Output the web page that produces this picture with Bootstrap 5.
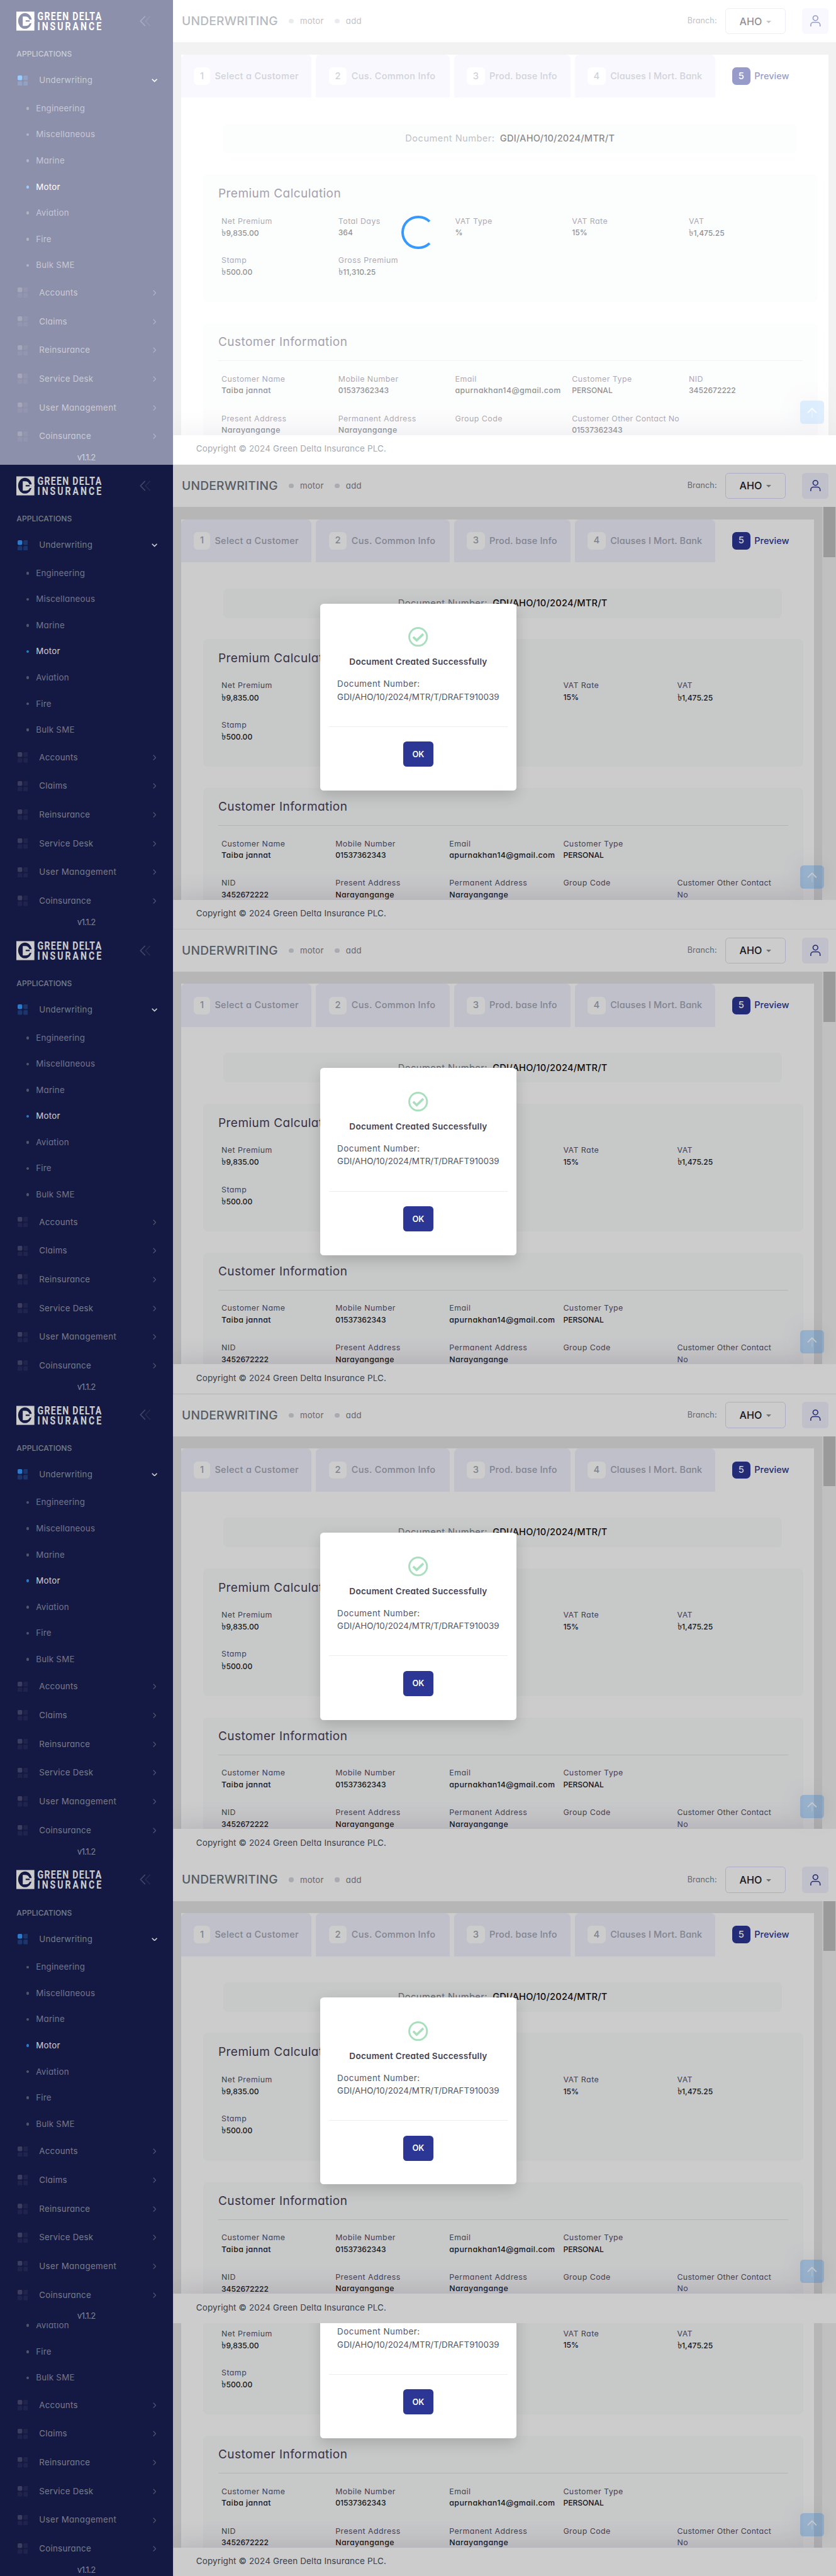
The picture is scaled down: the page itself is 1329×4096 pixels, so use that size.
<!DOCTYPE html>
<html lang="en">
<head>
<meta charset="utf-8">
<meta name="viewport" content="width=device-width, initial-scale=1">
<title>Underwriting</title>
<link href="https://cdn.jsdelivr.net/npm/bootstrap@5.3.0/dist/css/bootstrap.min.css" rel="stylesheet">
<style>
body{font-family:Inter,"Noto Sans",sans-serif;font-feature-settings:"cv11";background:#ccc;overflow:hidden}
.stack{width:1439px;zoom:.92356;line-height:1}
.screen{width:1439px;height:800px;overflow:hidden;flex:none}
.screen-cut{height:435px;overflow:hidden}
.screen-cut .screen{margin-bottom:-2px}
.t{white-space:nowrap}
/* sidebar */
.side{width:298px;background:#1a2056;color:#a0a5b6;font-size:14.4px;letter-spacing:.02em}
.brand{height:73px;padding:0 39px 0 28px}
.brand svg{overflow:visible}
.apps{height:41px;padding-left:28.5px;font-size:13px;font-weight:500;letter-spacing:.006em;color:#969cab}
.nav-main{height:49.5px;padding:0 27px 0 30px;color:#949cab}
.nav-main .t{margin-left:19.5px}
.nav-sub{height:45px;padding-left:45px;color:#8f92a9}
.nav-sub i{width:5px;height:5px;border-radius:50%;background:#666b88;margin-right:12px}
.nav-sub.on{color:#fff}
.nav-sub.on i{background:#3699ff}
.subs{padding-top:1px}
.chev{margin-right:2px}
.ver{padding-right:1px;height:24px;letter-spacing:-.05em}
.um{letter-spacing:.03em}
/* top bar */
.top{height:73px;background:#fff;padding:0 13px 0 15px}
.ttl{font-size:20.8px;font-weight:500;letter-spacing:.011em;color:#6c757d}
.crumb{font-size:14.2px;letter-spacing:.024em;color:#7b828c}
.dot{width:8px;height:8px;border-radius:50%;background:#d4d6de;margin:0 11px 0 19px}
.branch{font-size:13.5px;letter-spacing:.016em;color:#7b828c}
.aho{width:104px;height:45px;border:1.5px solid #d8d8f8;border-radius:6px;font-size:17.5px;font-weight:500;color:#1c1e2c;margin:0 29px 0 14px}
.aho i{border:5px solid transparent;border-top-color:#8b8b90;border-bottom:0;margin-left:7px;margin-top:2px}
.usr{width:45px;height:45px;background:#f1f1fd;border-radius:6px}
/* page body */
.page-bg{background:#e4e4e4;height:676px;padding:21px 13px 0 13.7px}
.scrolls .page-bg{padding-right:38px}
.sheet{background:#fff;height:660px}
.tab-i{height:74px;background:#f1f1fd;border-radius:8px 8px 0 0;margin-right:7.5px;padding-left:22px;font-size:15.7px;font-weight:500;letter-spacing:.024em;color:#a1a5b3}
.tab-i b{height:30px;border-radius:7px;background:#fff;margin-right:8px;font-weight:500;font-size:16px;letter-spacing:0;width:31px}
.tab-i.on{background:none;color:#2c3694;letter-spacing:.004em}
.tab-i.on b{background:#2c3694;color:#fff;margin-right:7px}
.w1{width:224.8px}.w1 b{width:28px}.w2{width:230px}.w3{width:200.5px;letter-spacing:.012em}.w4{width:241.5px;letter-spacing:.008em}
.docbar{margin:45px 55px 36px 73px;height:51px;border-radius:8px;background:#f9fafb;font-size:15.8px;letter-spacing:.033em;color:#7b828c}
.docbar b{font-weight:500;color:#111;letter-spacing:.015em;margin-left:9px}
.panel{margin:0 18.5px 37px 37.7px;padding:0 26.3px;background:#f9fafb;border-radius:8px}
.panel h4{font-size:20.6px;font-weight:400;letter-spacing:.024em;color:#464058;margin:0;padding-top:2px}
.prem{height:220px}.prem h4{height:66px}
.cust{height:260px}
.cust h4{height:65px;border-bottom:1px solid #e1e2e4}
.five{display:grid;grid-template-columns:repeat(5,1fr);padding-left:5.5px;margin-right:-5.5px}
.five.g1{padding-top:5px}.five.g2{padding-top:27.5px}.five.g3{padding-top:21px}.five.g4{padding-top:28px}
.lb{font-size:13.4px;height:20px;letter-spacing:.038em;color:#565068}
.vl{font-size:13.1px;height:20px;font-weight:500;letter-spacing:.001em;color:#1b1b24}
.vl.x{font-size:13.4px;letter-spacing:.034em}
.vl em{font-style:normal;font-size:16px;line-height:13px;margin-right:.5px}
.lg{letter-spacing:.025em}
.foot{height:51px;background:#fff;padding-left:39.5px;font-size:14.6px;letter-spacing:.011em;color:#464e5f;box-shadow:0 -8px 40px rgba(82,63,105,.16);clip-path:inset(-50px 0 0 0)}
.foot .t{margin-top:-3px}
/* layers above the page */
.veil{position:absolute;inset:0;background:rgba(0,0,0,.2)}
.veil.w{background:rgba(255,255,255,.5)}
.spin{position:absolute;left:691px;top:371px;width:58px;height:58px;border:5px solid #3699ff;border-right-color:transparent;border-radius:50%}
.toTop{position:absolute;left:1377px;top:690px;width:41px;height:40px;border-radius:6px;background:#3699ff;opacity:.32;box-shadow:0 0 30px rgba(82,63,105,.25)}
.toTopI{position:absolute;left:1377px;top:690px;width:41px;height:40px}
.track{position:absolute;right:0;top:73px;width:24px;height:676px;background:#f1f1f1;padding-left:2px}
.track div{width:21px;height:86px;background:#c1c1c1}
.dialog{position:absolute;left:551px;top:239px;width:338px;height:322px;background:#fff;border-radius:6px;box-shadow:0 8px 24px rgba(0,0,0,.16);padding:41px 15px 0}
.d1{height:34px;margin-bottom:9px;font-size:14.7px;font-weight:600;letter-spacing:.019em;color:#3f4254;margin-top:9.5px}
.d2{font-size:14.5px;line-height:22px;color:#50546a;padding-left:14.5px;height:85px;border-bottom:1px solid #ebedf0;margin:0}
.d2 span{display:block}
.d2 .a{letter-spacing:.038em}.d2 .c{letter-spacing:.003em}
.okb{width:52px;height:43px;border-radius:6px;background:#2c3694;color:#fff;font-size:14px;font-weight:600;margin:25.5px auto 0}
</style>
<script src="https://cdn.jsdelivr.net/npm/bootstrap@5.3.0/dist/js/bootstrap.bundle.min.js"></script>
</head>
<body>
<div class="stack" id="stack"></div>
<script>
const mid = 'd-flex align-items-center';
const grid = (c, a, b) => `<svg width="18" height="18" viewBox="0 0 18 18" fill="${c}"><rect width="8" height="8" rx="2" opacity="${a}"/><g opacity="${b}"><rect x="10" width="8" height="8" rx="2"/><rect y="10" width="8" height="8" rx="2"/><rect x="10" y="10" width="8" height="8" rx="2"/></g></svg>`;
const logo = `<svg width="147" height="34" viewBox="0 0 147 34"><path fill="#fff" d="M0 .500h31v32.700H0z"/><ellipse fill="#1a2056" cx="14.800" cy="16.600" rx="11.700" ry="13.500"/><path fill="#fff" d="M11 9h4c4 0 6.500 2.200 7.500 5.300H31v2.700h-4.200c-.2 1.500-.5 2.600-1 3.600H23c-1 3-3.500 4.700-7.500 4.700H11z"/><path fill="#1a2056" d="M16 15.400h7v2.400h-7z"/>
<g fill="#fff" font-family="Roboto" font-weight="700" font-size="20.600" transform="translate(36.300 0) scale(.74 1)"><text y="15.200" textLength="149" lengthAdjust="spacing">GREEN DELTA</text><text y="32.900" textLength="149" lengthAdjust="spacing">INSURANCE</text></g></svg>`;
const sub = n => `<div class="nav-sub ${mid}${n === 'Motor' ? ' on' : ''}"><i></i><span class="t">${n}</span></div>`;
const main = n => `<div class="nav-main ${mid}">${grid('#8a86a0', .45, .12)}<span class="t${n.length > 14 ? ' um' : ''}">${n}</span><svg class="ms-auto chev" width="6" height="10" viewBox="0 0 6 10" fill="none" stroke="#6c7090" stroke-width="1.200"><path d="M.8.800 5 5 .8 9.200"/></svg></div>`;
const side = `<aside class="side d-flex flex-column">
<div class="brand ${mid} justify-content-between">${logo}<svg width="19" height="19" viewBox="0 0 19 19" fill="none" stroke="#8b8eab" stroke-width="1.800"><path opacity=".5" d="M9.500 1 1.500 9.200l8 8.300"/><path opacity=".2" d="M18 1l-8 8.200 8 8.300"/></svg></div>
<div class="apps ${mid}"><span class="t">APPLICATIONS</span></div>
<div class="nav-main ${mid}">${grid('#3699ff', 1, .3)}<span class="t">Underwriting</span><svg class="ms-auto" width="10" height="6" viewBox="0 0 10 6" fill="none" stroke="#fff" stroke-width="1.800"><path d="M.8.800 5 5 9.200.8"/></svg></div>
<div class="subs">${['Engineering','Miscellaneous','Marine','Motor','Aviation','Fire','Bulk SME'].map(sub).join('')}</div>
${['Accounts','Claims','Reinsurance','Service Desk','User Management','Coinsurance'].map(main).join('')}
<div class="ver ${mid} justify-content-center"><span class="t">v1.1.2</span></div></aside>`;
const top_ = `<header class="top ${mid}"><span class="ttl t">UNDERWRITING</span><span class="dot"></span><span class="crumb t">motor</span><span class="dot"></span><span class="crumb t">add</span>
<span class="branch t ms-auto">Branch:</span><div class="aho ${mid} justify-content-center"><span>AHO</span><i></i></div>
<div class="usr ${mid} justify-content-center"><svg width="18" height="20" viewBox="0 0 18 20" fill="none" stroke="#2c3694" stroke-width="1.700"><circle cx="9" cy="5.200" r="4.200"/><path d="M1 19.500v-2.500a4.500 4.500 0 0 1 4.500-4.500h7a4.500 4.500 0 0 1 4.500 4.500v2.500"/></svg></div></header>`;
const tabs = `<div class="d-flex">${['Select a Customer','Cus. Common Info','Prod. base Info','Clauses I Mort. Bank','Preview'].map((n, i) => `<div class="tab-i ${mid} ${i == 4 ? 'on' : 'w' + (i + 1)}"><b class="${mid} justify-content-center">${i + 1}</b><span class="t">${n}</span></div>`).join('')}</div>`;
const cell = ([l, v]) => l ? `<div><div class="lb ${mid}${l.length > 20 ? ' lg' : ''}"><span class="t">${l}</span></div><div class="${v === 'No' ? 'lb' : 'vl'} ${/[a-z]/.test(v) ? 'x' : ''} ${mid}"><span class="t">${v.replace('৳', '<em>৳</em>')}</span></div></div>` : '<div></div>';
const row = (g, cells) => `<div class="five ${g}">${cells.map(cell).join('')}</div>`;
const A = {
 prem: [[['Net Premium','৳9,835.00'],['Total Days','364'],['VAT Type','%'],['VAT Rate','15%'],['VAT','৳1,475.25']], [['Stamp','৳500.00'],['Gross Premium','৳11,310.25']]],
 cust: [[['Customer Name','Taiba jannat'],['Mobile Number','01537362343'],['Email','apurnakhan14@gmail.com'],['Customer Type','PERSONAL'],['NID','3452672222']],
        [['Present Address','Narayangange'],['Permanent Address','Narayangange'],['Group Code',''],['Customer Other Contact No','01537362343']]]};
const B = {
 prem: A.prem.map((r, i) => i ? [r[0]] : [r[0], [''], [''], r[3], r[4]]),
 cust: [A.cust[0].slice(0, 4), [['NID','3452672222'],['Present Address','Narayangange'],['Permanent Address','Narayangange'],['Group Code',''],['Customer Other Contact','No']]]};
const body = d => `<div class="page-bg overflow-hidden"><div class="sheet">${tabs}
<div class="docbar ${mid} justify-content-center"><span class="t">Document Number:</span><b class="t">GDI/AHO/10/2024/MTR/T</b></div>
<section class="panel prem"><h4 class="${mid}">Premium Calculation</h4>${row('g1', d.prem[0])}${row('g2', d.prem[1])}</section>
<section class="panel cust"><h4 class="${mid}">Customer Information</h4>${row('g3', d.cust[0])}${row('g4', d.cust[1])}</section></div></div>`;
const arrow = `<svg class="toTopI" viewBox="0 0 41 40" fill="none" stroke="#fff" stroke-width="2"><path d="M13 21l7.500-7.500L28 21" stroke-linejoin="round" opacity=".9"/><path opacity=".3" d="M20.500 15v14"/></svg>`;
const dialog = `<div class="dialog"><svg class="d-block mx-auto" width="34" height="34" viewBox="0 0 34 34" fill="none" stroke="#a8e0bd"><circle cx="17" cy="17" r="15.300" stroke-width="3.200"/><path d="M8.500 17l6 6L26 12" stroke-width="4"/></svg>
<div class="d1 ${mid} justify-content-center"><span class="t">Document Created Successfully</span></div>
<p class="d2"><span class="a">Document Number:</span><span class="c">GDI/AHO/10/2024/MTR/T/DRAFT910039</span></p>
<div class="okb ${mid} justify-content-center">OK</div></div>`;
const screen = first => `<div class="screen position-relative d-flex ${first ? '' : 'scrolls'}">${side}<main class="flex-fill">${top_}${body(first ? A : B)}<footer class="foot ${mid} position-relative"><span class="t">Copyright © 2024 Green Delta Insurance PLC.</span></footer></main>
${first ? '' : '<div class="track"><div></div></div>'}<div class="toTop"></div>${arrow}<div class="veil ${first ? 'w' : ''}"></div>${first ? '<div class="spin"></div>' : dialog}</div>`;
document.getElementById('stack').innerHTML = screen(true) + screen(false).repeat(4) + `<div class="screen-cut d-flex align-items-end">${screen(false)}</div>`;
</script>
</body>
</html>
